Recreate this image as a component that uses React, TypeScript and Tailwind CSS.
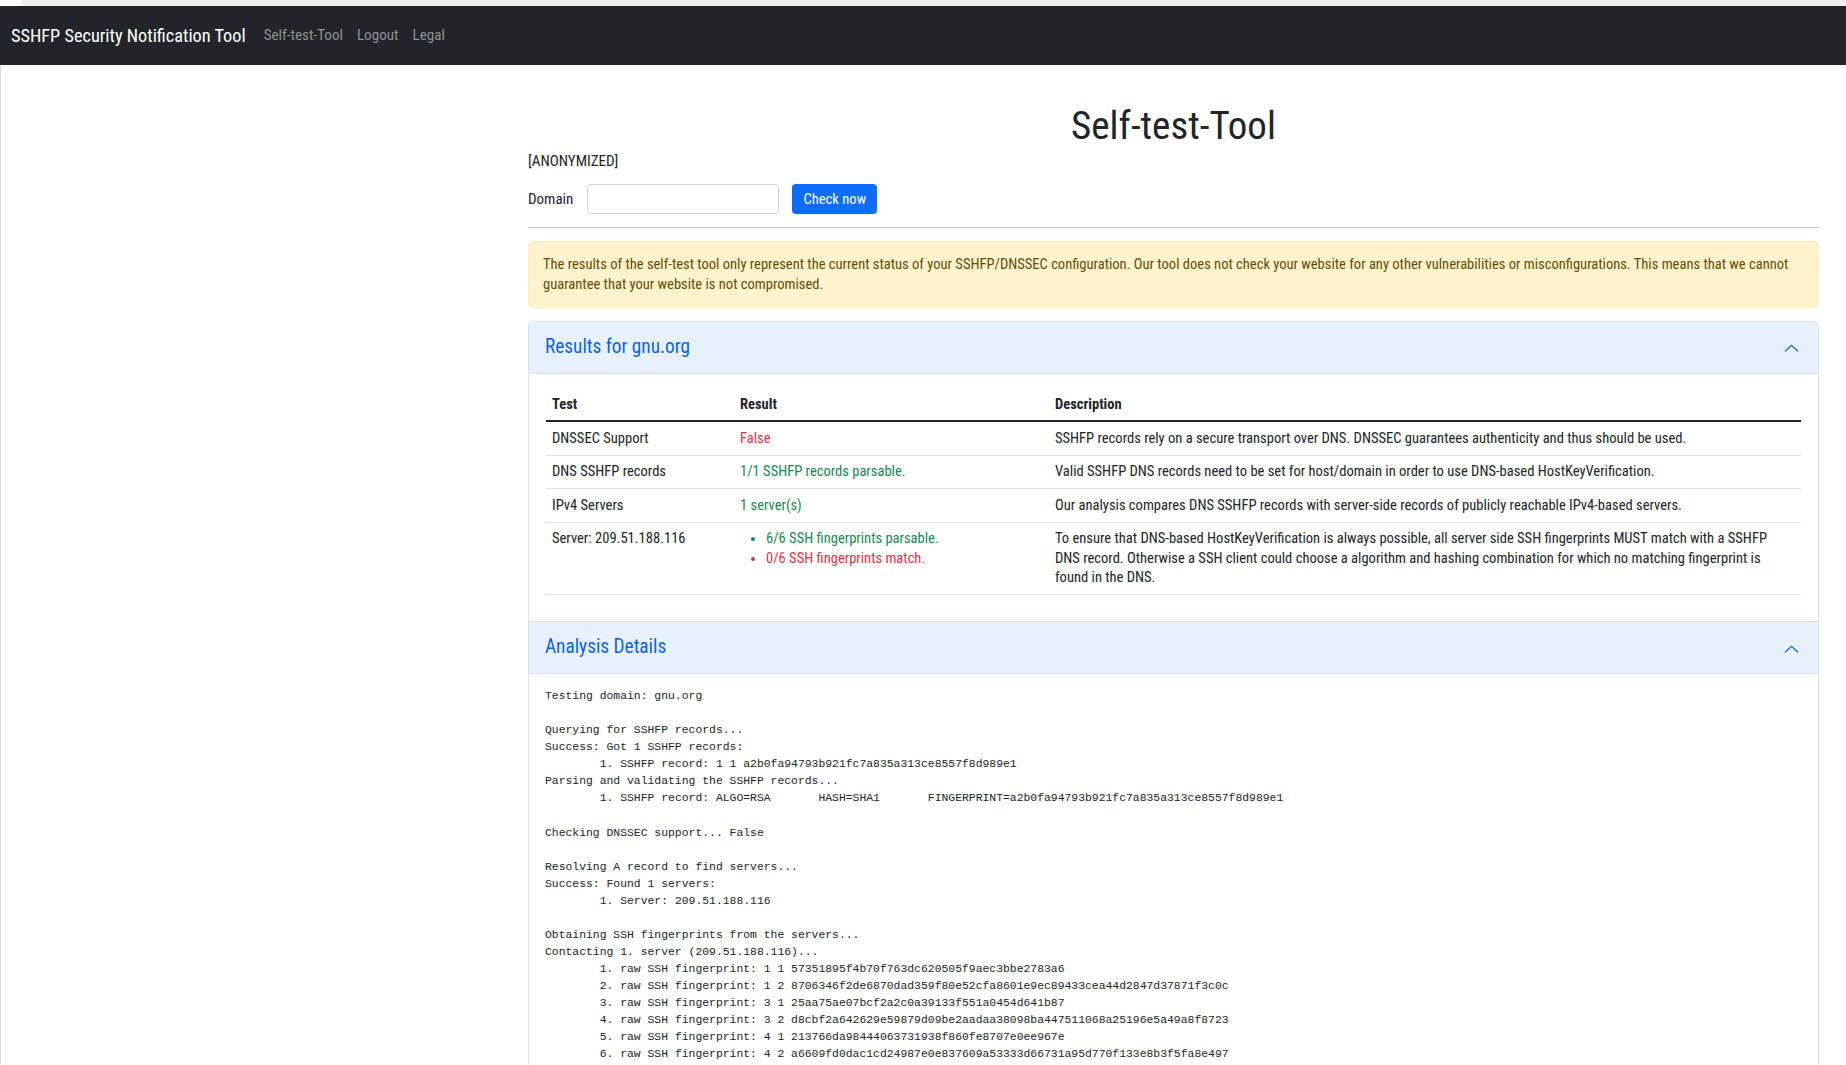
const LOG = [
  'Testing domain: gnu.org',
  '',
  'Querying for SSHFP records...',
  'Success: Got 1 SSHFP records:',
  '\t1. SSHFP record: 1 1 a2b0fa94793b921fc7a835a313ce8557f8d989e1',
  'Parsing and validating the SSHFP records...',
  '\t1. SSHFP record: ALGO=RSA\tHASH=SHA1\tFINGERPRINT=a2b0fa94793b921fc7a835a313ce8557f8d989e1',
  '',
  'Checking DNSSEC support... False',
  '',
  'Resolving A record to find servers...',
  'Success: Found 1 servers:',
  '\t1. Server: 209.51.188.116',
  '',
  'Obtaining SSH fingerprints from the servers...',
  'Contacting 1. server (209.51.188.116)...',
  '\t1. raw SSH fingerprint: 1 1 57351895f4b70f763dc620505f9aec3bbe2783a6',
  '\t2. raw SSH fingerprint: 1 2 8706346f2de6870dad359f80e52cfa8601e9ec89433cea44d2847d37871f3c0c',
  '\t3. raw SSH fingerprint: 3 1 25aa75ae07bcf2a2c0a39133f551a0454d641b87',
  '\t4. raw SSH fingerprint: 3 2 d8cbf2a642629e59879d09be2aadaa38098ba447511068a25196e5a49a8f8723',
  '\t5. raw SSH fingerprint: 4 1 213766da98444063731938f860fe8707e0ee967e',
  '\t6. raw SSH fingerprint: 4 2 a6609fd0dac1cd24987e0e837609a53333d66731a95d770f133e8b3f5fa8e497',
].join('\n')

interface Row {
  test: string
  result: JSX.Element
  description: string
}

const ROWS: Row[] = [
  {
    test: 'DNSSEC Support',
    result: <span className="text-[#dc3545]">False</span>,
    description:
      'SSHFP records rely on a secure transport over DNS. DNSSEC guarantees authenticity and thus should be used.',
  },
  {
    test: 'DNS SSHFP records',
    result: <span className="text-[#198754]">1/1 SSHFP records parsable.</span>,
    description:
      'Valid SSHFP DNS records need to be set for host/domain in order to use DNS-based HostKeyVerification.',
  },
  {
    test: 'IPv4 Servers',
    result: <span className="text-[#198754]">1 server(s)</span>,
    description:
      'Our analysis compares DNS SSHFP records with server-side records of publicly reachable IPv4-based servers.',
  },
  {
    test: 'Server: 209.51.188.116',
    result: (
      <ul className="list-disc pl-[26px] marker:text-[13px]">
        <li className="text-[#198754]">6/6 SSH fingerprints parsable.</li>
        <li className="text-[#dc3545]">0/6 SSH fingerprints match.</li>
      </ul>
    ),
    description:
      'To ensure that DNS-based HostKeyVerification is always possible, all server side SSH fingerprints MUST match with a SSHFP DNS record. Otherwise a SSH client could choose a algorithm and hashing combination for which no matching fingerprint is found in the DNS.',
  },
]

function AccordionHeader({ title }: { title: string }) {
  return (
    <div className="flex h-[51px] items-center justify-between bg-[#e7f1ff] pl-[16px] pr-[19px] text-[19.3px] text-[#0c63e4]">
      <span>{title}</span>
      <svg width="15" height="8" viewBox="0 0 15 8" fill="none" className="mt-[2px]">
        <path d="M1 7.2L7.5 1.2L14 7.2" stroke="#0c63e4" strokeWidth="1.2" />
      </svg>
    </div>
  )
}

export default function App() {
  return (
    <div className="flex h-[1065px] flex-col overflow-hidden bg-white font-[Roboto,sans-serif] text-[14.55px] text-[#212529] [font-stretch:82%]">
      <div className="flex h-[6px] shrink-0">
        <div className="w-[22px] bg-white" />
        <div className="flex-1 bg-[#efefef]" />
      </div>

      <nav className="flex h-[59px] shrink-0 items-center bg-[#212529] pl-[11px]">
        <span className="mr-[11px] text-[18.3px] text-white">SSHFP Security Notification Tool</span>
        {['Self-test-Tool', 'Logout', 'Legal'].map((l) => (
          <a key={l} className="px-[7px] text-[15.1px] text-[#8f9194]">
            {l}
          </a>
        ))}
      </nav>

      <main className="flex flex-1 border-l border-[#dadada]">
        <div className="w-[527px] shrink-0" />
        <div className="w-[1291px] shrink-0">
          <h1 className="mt-[38px] text-center text-[39px] leading-[47px]">Self-test-Tool</h1>
          <p className="mt-[1px] text-[15px] leading-[20px]">[ANONYMIZED]</p>

          <div className="mt-[13px] flex items-center">
            <label className="mr-[14px] text-[15px]">Domain</label>
            <input className="h-[30px] w-[192px] rounded-[4px] border border-[#ced4da] px-2" />
            <button className="ml-[13px] h-[30px] w-[85px] rounded-[4px] bg-[#0d6efd] pt-[1px] text-[14.6px] text-white">
              Check now
            </button>
          </div>

          <hr className="mt-[12.5px] border-t border-[#c6c7c8]" />

          <div className="mt-[13px] rounded-[5px] border border-[#ffecb5] bg-[#fff3cd] px-[14px] pb-[12px] pt-[13px] leading-[20px] text-[#664d03]">
            The results of the self-test tool only represent the current status of your SSHFP/DNSSEC configuration. Our
            tool does not check your website for any other vulnerabilities or misconfigurations. This means that we cannot
            guarantee that your website is not compromised.
          </div>

          <div className="mt-[13px] rounded-t-[5px] border border-b-0 border-[#dee2e6]">
            <AccordionHeader title="Results for gnu.org" />
            <div className="border-t border-[#dee2e6] px-[17px] pb-[26px] pt-[14px]">
              <table className="w-full table-fixed border-collapse leading-[19.5px]">
                <colgroup>
                  <col className="w-[188px]" />
                  <col className="w-[315px]" />
                  <col />
                </colgroup>
                <thead>
                  <tr className="border-b-2 border-[#212529] text-left">
                    <th className="px-[6px] pb-[6px] pt-[7px] font-bold">Test</th>
                    <th className="px-[6px] pb-[6px] pt-[7px] font-bold">Result</th>
                    <th className="px-[6px] pb-[6px] pt-[7px] font-bold">Description</th>
                  </tr>
                </thead>
                <tbody>
                  {ROWS.map((r) => (
                    <tr key={r.test} className="border-b border-[#dee2e6] align-top">
                      <td className="px-[6px] py-[6.5px]">{r.test}</td>
                      <td className="px-[6px] py-[6.5px]">{r.result}</td>
                      <td className="px-[6px] py-[6.5px]">{r.description}</td>
                    </tr>
                  ))}
                </tbody>
              </table>
            </div>

            <div className="border-t border-[#dee2e6]">
              <AccordionHeader title="Analysis Details" />
            </div>
            <div className="border-t border-[#dee2e6] px-[16px] pb-[13px] pt-[14px]">
              <pre className="font-['Liberation_Mono',monospace] text-[11.4px] leading-[17.07px] whitespace-pre [tab-size:8]">
                {LOG}
              </pre>
            </div>
          </div>
        </div>
      </main>
    </div>
  )
}
